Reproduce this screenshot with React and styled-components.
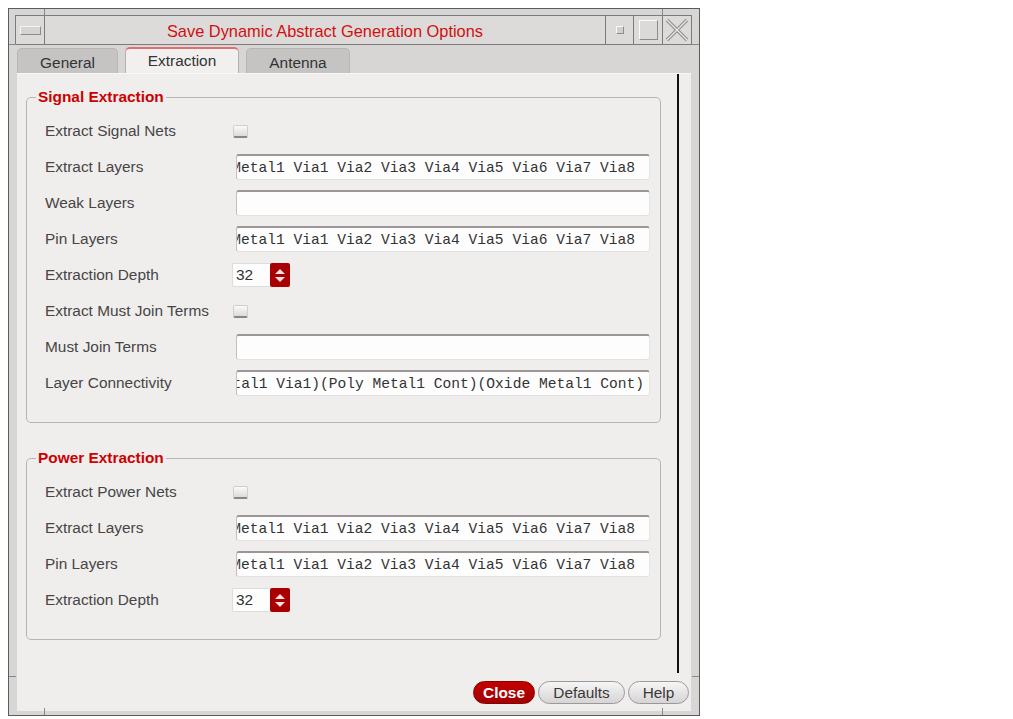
import React from 'react';
import styled, { createGlobalStyle } from 'styled-components';

const GlobalStyle = createGlobalStyle`
  body {
    margin: 0;
    background: #ffffff;
    font-family: "Liberation Sans", Arial, sans-serif;
  }
`;

const Window = styled.div`
  position: relative;
  margin: 8px;
  width: 692px;
  height: 708px;
  box-sizing: border-box;
  border: 1px solid #5c5c5c;
  background: #d8d6d5;
  padding: 6px 7px 4px 6px;
  display: flex;
  flex-direction: column;
`;

const Mark = styled.div`
  position: absolute;
  background: #8a8888;
  ${p => p.v ? 'width: 1px; height: 7px;' : 'height: 1px; width: 7px;'}
`;

const TitleBar = styled.div`
  display: flex;
  height: 30px;
  box-sizing: border-box;
  border: 1px solid #7c7a7a;
  background: #dddbda;
`;

const Cell = styled.div`
  width: ${p => p.w || 28}px;
  display: flex;
  align-items: center;
  justify-content: center;
  border-left: ${p => p.first ? 'none' : '1px solid #7c7a7a'};
  border-right: ${p => p.first ? '1px solid #7c7a7a' : 'none'};
  box-sizing: border-box;
`;

const MenuKnob = styled.div`
  width: 19px;
  height: 7px;
  border: 1px solid #8d8b8b;
  border-top-color: #f4f4f4;
  border-left-color: #f4f4f4;
  background: #d6d4d3;
`;

const MinKnob = styled.div`
  width: 6px;
  height: 6px;
  border: 1px solid #8d8b8b;
  border-top-color: #fafafa;
  border-left-color: #fafafa;
  background: #d2d0cf;
`;

const MaxKnob = styled.div`
  width: 17px;
  height: 18px;
  border: 1px solid #8d8b8b;
  border-top-color: #fafafa;
  border-left-color: #fafafa;
  background: #dcdad9;
`;

const Title = styled.div`
  flex: 1;
  text-align: center;
  color: #d01010;
  font-size: 16.4px;
  line-height: 24px;
  padding-top: 3px;
`;

const Body = styled.div`
  flex: 1;
  display: flex;
  flex-direction: column;
  padding: 2px 1px 0 2px;
`;

const Tabs = styled.div`
  display: flex;
  gap: 7px;
  height: 26px;
  align-items: flex-end;
`;

const Tab = styled.div`
  width: ${p => p.w}px;
  height: ${p => p.active ? 26 : 25}px;
  box-sizing: border-box;
  border: 1px solid ${p => p.active ? '#b4b0b0' : '#b8b6b5'};
  border-top: ${p => p.active ? '2px solid #e07070' : '1px solid #b8b6b5'};
  border-bottom: none;
  border-radius: 5px 5px 0 0;
  background: ${p => p.active ? '#f1f0ef' : '#c6c4c3'};
  color: #333;
  font-size: 15.4px;
  display: flex;
  align-items: center;
  justify-content: center;
  padding-top: ${p => p.active ? 0 : 3}px;
`;

const Content = styled.div`
  flex: 1;
  display: flex;
  flex-direction: column;
  background: #efeeed;
  border-top: 1px solid #f8f8f8;
`;

const Main = styled.div`
  height: 599px;
  display: flex;
`;

const Scroll = styled.div`
  width: 662px;
  box-sizing: border-box;
  border-right: 2px solid #111;
  padding: 14px 16px 0 9px;
  display: flex;
  flex-direction: column;
  gap: 26px;
`;

const Group = styled.fieldset`
  margin: 0;
  padding: 7px 10px 21px 18px;
  border: 1px solid #b9b4b2;
  border-radius: 5px;
  min-inline-size: 0;
`;

const Legend = styled.legend`
  margin-left: -9px;
  padding: 0 2px;
  color: #cc0000;
  font-weight: bold;
  font-size: 15.4px;
`;

const Row = styled.div`
  display: grid;
  grid-template-columns: 187px 1fr;
  align-items: center;
  height: 36px;
`;

const Label = styled.div`
  color: #474545;
  font-size: 15.4px;
`;

const Check = styled.div`
  width: 13px;
  height: 10px;
  margin-left: 1px;
  border: 1px solid #d0cece;
  border-bottom: 2px solid #8a8686;
  border-radius: 2px;
  background: linear-gradient(#fafafa, #dcdada);
`;

const Field = styled.div`
  margin-left: 4px;
  width: 414px;
  height: 26px;
  box-sizing: border-box;
  background: #fdfdfd;
  border-top: 2px solid #9c9696;
  border-left: 1px solid #c4bfbf;
  border-right: 1px solid #e6e4e4;
  border-bottom: 1px solid #e2e0e0;
  border-radius: 3px;
  display: flex;
  justify-content: flex-end;
  align-items: center;
  overflow: hidden;
  white-space: nowrap;
  padding-right: ${p => p.pad || 14}px;
  font-family: "Liberation Mono", "Courier New", monospace;
  font-size: 14.6px;
  color: #333;
`;

const Spin = styled.div`
  display: flex;
  height: 24px;
`;

const SpinValue = styled.div`
  width: 38px;
  box-sizing: border-box;
  background: #fdfdfd;
  border: 1px solid #dedcdc;
  border-right: none;
  border-radius: 2px 0 0 2px;
  font-size: 15.4px;
  color: #333;
  padding: 2px 0 0 3px;
`;

const SpinButton = styled.div`
  width: 20px;
  background: #a80000;
  border-radius: 2px;
  display: flex;
  flex-direction: column;
  align-items: center;
  justify-content: center;
  gap: 3px;
`;

const Arrow = styled.div`
  width: 0;
  height: 0;
  border-left: 5px solid transparent;
  border-right: 5px solid transparent;
  ${p => p.down ? 'border-top: 5px solid #f4dede;' : 'border-bottom: 5px solid #f4dede;'}
`;

const Side = styled.div`
  flex: 1;
`;

const Footer = styled.div`
  display: flex;
  justify-content: flex-end;
  gap: 3px;
  padding: 8px 2px 0 0;
`;

const Button = styled.div`
  width: ${p => p.w}px;
  height: 23px;
  box-sizing: border-box;
  border-radius: 12px;
  display: flex;
  align-items: center;
  justify-content: center;
  font-size: 15.4px;
  font-weight: ${p => p.primary ? 'bold' : 'normal'};
  color: ${p => p.primary ? '#ffffff' : '#3a3838'};
  background: ${p => p.primary
    ? 'linear-gradient(#c40000, #a00000)'
    : 'linear-gradient(#f6f6f6, #d6d4d4)'};
  border: 1px solid ${p => p.primary ? '#8a0000' : '#9c9898'};
`;

const layers = 'Metal1 Via1 Via2 Via3 Via4 Via5 Via6 Via7 Via8';

function Checkbox() {
  return <Check />;
}

function Spinner({ value }) {
  return (
    <Spin>
      <SpinValue>{value}</SpinValue>
      <SpinButton>
        <Arrow />
        <Arrow down />
      </SpinButton>
    </Spin>
  );
}

function FormRow({ label, children }) {
  return (
    <Row>
      <Label>{label}</Label>
      <div>{children}</div>
    </Row>
  );
}

function CloseIcon() {
  return (
    <svg width="24" height="24" viewBox="0 0 24 24">
      <path d="M2 2 L22 22 M22 2 L2 22" stroke="#8c8a8a" strokeWidth="3.4" fill="none" />
      <path d="M2 2 L22 22 M22 2 L2 22" stroke="#e8e6e6" strokeWidth="1.4" fill="none" />
    </svg>
  );
}

export default function App() {
  return (
    <>
      <GlobalStyle />
      <Window>
        <Mark v style={{ left: 35, top: 0 }} />
        <Mark v style={{ left: 653, top: 0 }} />
        <Mark style={{ left: 0, top: 35 }} />
        <Mark style={{ right: 0, top: 35 }} />
        <Mark style={{ left: 0, bottom: 38 }} />
        <Mark style={{ right: 0, bottom: 38 }} />
        <Mark v style={{ left: 35, bottom: 0 }} />
        <Mark v style={{ left: 653, bottom: 0 }} />
        <TitleBar>
          <Cell first w={29}><MenuKnob /></Cell>
          <Title>Save Dynamic Abstract Generation Options</Title>
          <Cell><MinKnob /></Cell>
          <Cell w={29}><MaxKnob /></Cell>
          <Cell w={29}><CloseIcon /></Cell>
        </TitleBar>
        <Body>
          <Tabs>
            <Tab w={101}>General</Tab>
            <Tab w={114} active>Extraction</Tab>
            <Tab w={104}>Antenna</Tab>
          </Tabs>
          <Content>
            <Main>
              <Scroll>
                <Group>
                  <Legend>Signal Extraction</Legend>
                  <FormRow label="Extract Signal Nets"><Checkbox /></FormRow>
                  <FormRow label="Extract Layers"><Field>{layers}</Field></FormRow>
                  <FormRow label="Weak Layers"><Field /></FormRow>
                  <FormRow label="Pin Layers"><Field>{layers}</Field></FormRow>
                  <FormRow label="Extraction Depth"><Spinner value="32" /></FormRow>
                  <FormRow label="Extract Must Join Terms"><Checkbox /></FormRow>
                  <FormRow label="Must Join Terms"><Field /></FormRow>
                  <FormRow label="Layer Connectivity">
                    <Field pad={5}>(Metal1 Via1)(Poly Metal1 Cont)(Oxide Metal1 Cont)</Field>
                  </FormRow>
                </Group>
                <Group>
                  <Legend>Power Extraction</Legend>
                  <FormRow label="Extract Power Nets"><Checkbox /></FormRow>
                  <FormRow label="Extract Layers"><Field>{layers}</Field></FormRow>
                  <FormRow label="Pin Layers"><Field>{layers}</Field></FormRow>
                  <FormRow label="Extraction Depth"><Spinner value="32" /></FormRow>
                </Group>
              </Scroll>
              <Side />
            </Main>
            <Footer>
              <Button primary w={62}>Close</Button>
              <Button w={87}>Defaults</Button>
              <Button w={61}>Help</Button>
            </Footer>
          </Content>
        </Body>
      </Window>
    </>
  );
}
